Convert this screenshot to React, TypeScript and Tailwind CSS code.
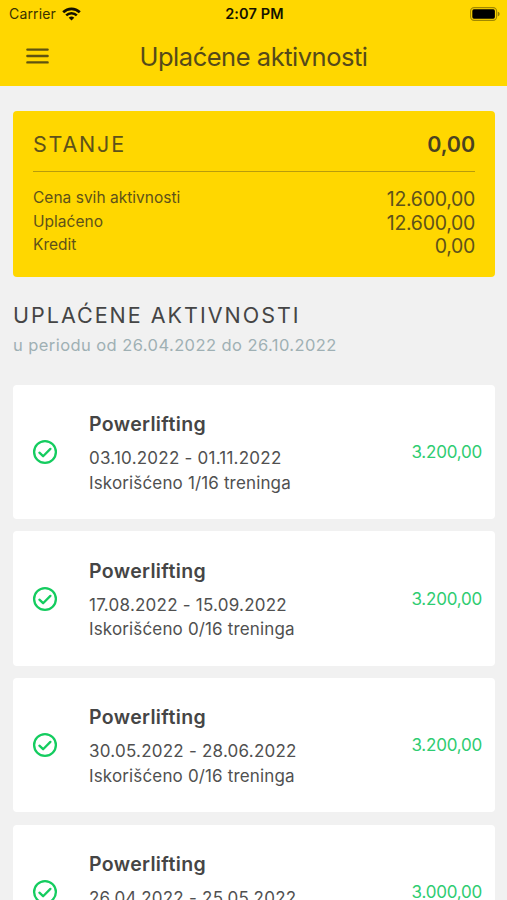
import React from "react";

interface Activity {
  name: string;
  period: string;
  used: string;
  price: string;
}

const activities: Activity[] = [
  {
    name: "Powerlifting",
    period: "03.10.2022 - 01.11.2022",
    used: "Iskorišćeno 1/16 treninga",
    price: "3.200,00",
  },
  {
    name: "Powerlifting",
    period: "17.08.2022 - 15.09.2022",
    used: "Iskorišćeno 0/16 treninga",
    price: "3.200,00",
  },
  {
    name: "Powerlifting",
    period: "30.05.2022 - 28.06.2022",
    used: "Iskorišćeno 0/16 treninga",
    price: "3.200,00",
  },
  {
    name: "Powerlifting",
    period: "26.04.2022 - 25.05.2022",
    used: "Iskorišćeno 0/16 treninga",
    price: "3.000,00",
  },
];

const summary = [
  { label: "Cena svih aktivnosti", value: "12.600,00" },
  { label: "Uplaćeno", value: "12.600,00" },
  { label: "Kredit", value: "0,00" },
];

const WifiIcon: React.FC = () => (
  <svg width="19" height="14" viewBox="0 0 19 14" fill="none" stroke="#141200">
    <path d="M1.2 5.2a11.8 11.8 0 0 1 16.6 0" strokeWidth="2.7" />
    <path d="M4.2 8.4a7.5 7.5 0 0 1 10.6 0" strokeWidth="2.5" />
    <path d="M9.5 13.6 6.7 10.8a4 4 0 0 1 5.6 0z" fill="#141200" stroke="none" />
  </svg>
);

const BatteryIcon: React.FC = () => (
  <svg width="30" height="14" viewBox="0 0 30 14" fill="none">
    <rect x="0.6" y="0.6" width="26" height="12.8" rx="3.6" stroke="#141200" strokeOpacity="0.4" strokeWidth="1.1" />
    <rect x="2.3" y="2.3" width="22.6" height="9.4" rx="1.6" fill="#000" />
    <path d="M27.8 4.7c1.1.3 1.8 1.2 1.8 2.3s-.7 2-1.8 2.3z" fill="#141200" fillOpacity="0.45" />
  </svg>
);

const MenuIcon: React.FC = () => (
  <svg width="24" height="18" viewBox="0 0 24 18" stroke="#5f5310" strokeWidth="2.4" strokeLinecap="round">
    <path d="M2.4 2.6h20.2M2.4 9h20.2M2.4 15.4h20.2" />
  </svg>
);

const CheckIcon: React.FC = () => (
  <svg width="26" height="26" viewBox="0 0 26 26" fill="none" stroke="#14cc5f" strokeWidth="2.3" strokeLinecap="round" strokeLinejoin="round">
    <circle cx="13" cy="13" r="10.9" />
    <path d="M7.4 13.7l3.7 3.5 7.3-7.3" />
  </svg>
);

const ActivityCard: React.FC<{ item: Activity }> = ({ item }) => (
  <div className="flex h-[134.3px] shrink-0 items-center rounded-[4px] bg-white pr-[12.5px] pl-[19px]">
    <CheckIcon />
    <div className="ml-[31px] pt-[3.4px]">
      <h3 className="mb-[10px] text-[19.5px] leading-6 font-semibold tracking-[0.35px] text-[#454545]">
        {item.name}
      </h3>
      <p className="text-[17px] leading-[24.5px] tracking-[0.23px]">{item.period}</p>
      <p className="text-[17px] leading-[24.5px] tracking-[0.15px]">{item.used}</p>
    </div>
    <span className="ml-auto pt-[2px] text-[17px] tracking-[-0.22px] text-[#2ecc71]">{item.price}</span>
  </div>
);

const App: React.FC = () => {
  return (
    <div className="flex h-screen flex-col overflow-hidden bg-[#f1f1f1] font-['Inter',sans-serif] text-[#505050]">
      <header className="h-[86.4px] shrink-0 bg-[#ffd700]">
        {/* Status bar */}
        <div className="grid h-[27px] grid-cols-[1fr_auto_1fr] items-center pr-[7px] pl-[9px]">
          <div className="flex items-center gap-[6px] text-[14px] tracking-[0.15px] text-[#3a3200]">
            Carrier
            <WifiIcon />
          </div>
          <span className="text-[14.5px] font-semibold tracking-[0.15px] text-[#141200]">2:07 PM</span>
          <div className="flex justify-end">
            <BatteryIcon />
          </div>
        </div>
        {/* Title bar */}
        <div className="grid h-[58px] grid-cols-[1fr_auto_1fr] items-center px-[25px]">
          <MenuIcon />
          <h1 className="pt-[2px] text-[25.5px] tracking-[-0.48px] text-[#554a1a]">Uplaćene aktivnosti</h1>
        </div>
      </header>

      <main className="flex flex-col pt-[24.6px] pr-[12.5px] pl-[13px]">
        <section className="h-[166px] shrink-0 rounded-[4px] bg-[#ffd700] pt-[5px] pr-[19.5px] pl-5 text-[#5e521a]">
          <div className="flex h-[56px] items-center justify-between border-b border-[#b89c0c] pt-[1px]">
            <h2 className="text-[21.5px] tracking-[1.8px]">STANJE</h2>
            <span className="text-[21.5px] font-semibold tracking-[-0.1px] text-[#4a4220]">0,00</span>
          </div>
          <div className="pt-[13px]">
            {summary.map((row) => (
              <div key={row.label} className="flex h-[23.7px] justify-between">
                <span className="text-[15.5px] leading-[25.4px] tracking-[0.02px]">{row.label}</span>
                <span className="text-[19.5px] leading-[29px] tracking-[-0.3px]">{row.value}</span>
              </div>
            ))}
          </div>
        </section>

        <div className="pt-[22.5px] pb-[26.9px]">
          <h2 className="text-[21.5px] leading-8 tracking-[2px] text-[#454545]">UPLAĆENE AKTIVNOSTI</h2>
          <p className="pt-[1.5px] text-[16.5px] leading-[25px] tracking-[0.43px] text-[#9fb0b4]">
            u periodu od 26.04.2022 do 26.10.2022
          </p>
        </div>

        <div className="flex flex-col gap-[12.3px]">
          {activities.map((item) => (
            <ActivityCard key={item.period} item={item} />
          ))}
        </div>
      </main>
    </div>
  );
};

export default App;
